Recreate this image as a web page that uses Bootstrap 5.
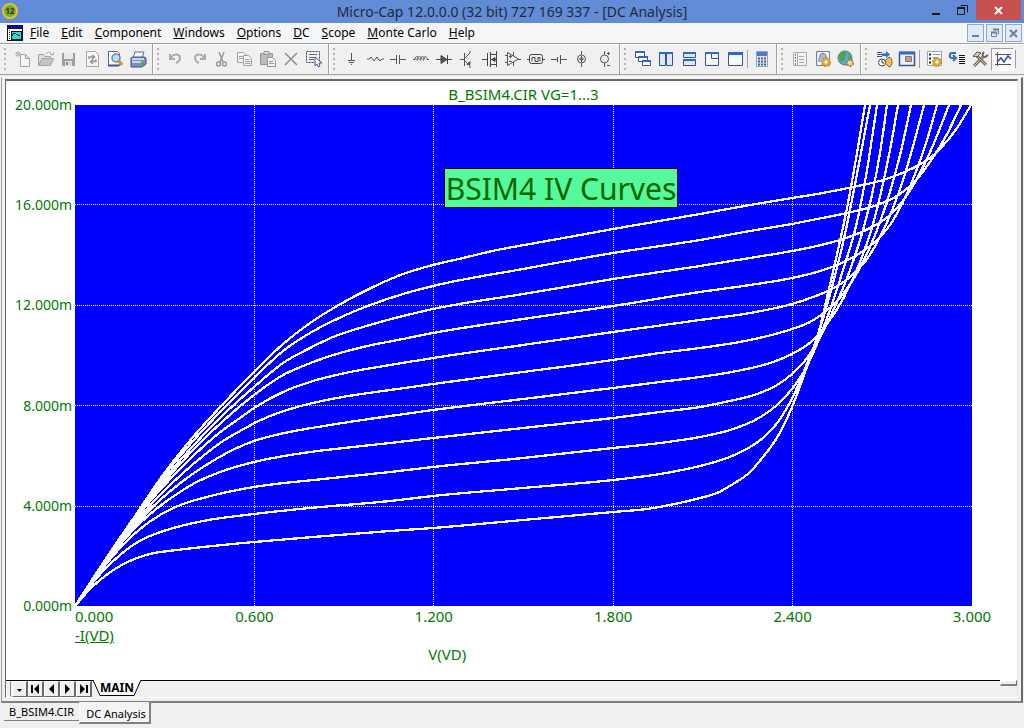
<!DOCTYPE html>
<html lang="en">
<head>
<meta charset="utf-8">
<meta name="viewport" content="width=device-width, initial-scale=1">
<title>Micro-Cap 12 - DC Analysis</title>
<link href="https://cdn.jsdelivr.net/npm/bootstrap@5.3.0/dist/css/bootstrap.min.css" rel="stylesheet">
<style>
  body { font-family: "Noto Sans", sans-serif; font-size: 12px; line-height: 16px; background: #f0f0f0; color: #000; }
  button { border: 0; background: none; padding: 0; }
  .titlebar { background: #628cd5; height: 23px; color: #1f2a3c; }
  .titlebar h1 { font-size: 14px; line-height: 23px; font-weight: 400; }
  .app-icon { left: 1px; top: 3px; }
  .win-ctl { right: 3px; top: 0; }
  .win-ctl button { width: 26px; height: 20px; }
  .win-ctl .close-btn { width: 45px; background: #c75050; }
  .menubar { background: #f5f6f7; height: 20px; padding-left: 7px; }
  .menubar .menus { gap: 12px; margin-left: 7px; }
  .menubar a { color: #000; text-decoration: none; line-height: 18px; }
  .mdi-ctl { gap: 2px; margin-right: 2px; }
  .mdi-ctl button { width: 17px; height: 18px; border: 1px solid #8fa8c8; background: #dfebf8; }
  .toolbar { height: 32px; border-top: 1px solid #a0a0a0; border-bottom: 1px solid #a0a0a0; box-shadow: inset 0 1px #fff; }
  .tool-group { padding-right: 3px; border-right: 1px solid #a0a0a0; box-shadow: 1px 0 #fff; }
  .tool-group:last-child { border-right: 0; box-shadow: none; }
  .grip { width: 3px; height: 22px; margin: 0 4px; background: repeating-linear-gradient(#b4b4b4 0 2px, transparent 2px 5px); background-size: 2px 100%; background-repeat: no-repeat; }
  .tool { width: 23px; height: 23px; }
  .tool svg { width: 18px; height: 18px; }
  .tool.pressed { border: 1px solid #a0a0a0; border-right-color: #fff; border-bottom-color: #fff; background: #f8f8f8; }
  .tool-sep { width: 1px; height: 18px; margin: 0 2px 0 1px; background: #a0a0a0; }
  .mdi { margin: 2px 1px 0 1px; border: 1px solid #fff; border-left-color: #a0a0a0; border-right: 2px solid #696969; border-bottom: 2px solid #808080; padding: 1px 3px 3px 3px; min-height: 0; }
  .sheet { border: 2px solid #696969; border-left-width: 1px; border-right: 1px solid #e3e3e3; border-bottom: 1px solid #fff; min-height: 0; }
  .chart { background: #fff; color: #007a00; font-size: 15px; line-height: 20px; min-height: 0; padding-top: 3px; }
  .chart h2 { font-size: 15px; font-weight: 400; line-height: 20px; margin: 0 45px 1px 69px; }
  .y-axis { width: 69px; padding-right: 3px; margin: -10px 0; font-size: 14px; }
  .plot { background: #00f; margin-right: 45px; min-width: 0; }
  .plot svg { display: block; width: 100%; height: 100%; position: absolute; inset: 0; }
  .plot-label { left: 41.1%; top: 12.6%; height: 40px; padding: 0 1px; background: #54fa9b; border: 1px solid #000; color: #006400; font-size: 30px; line-height: 40px; }
  .x-axis { margin: 0 45px 0 69px; height: 19px; }
  .x-axis span { width: 0; display: flex; justify-content: center; }
  .x-axis span:first-child { justify-content: flex-start; }
  .captions { margin: 0 45px 0 69px; font-size: 15px; padding-bottom: 16px; }
  .captions a { color: #007a00; }
  .captions p { width: 83%; margin-top: -1px; }
  .sheet-nav { height: 17px; border-top: 1px solid #000; background: #f0f0f0; }
  .nav-stub { width: 5px; border: 1px solid #fff; border-right-color: #808080; margin-right: 1px; }
  .step { width: 16px; height: 16px; border: 1px solid #fff; border-right: 2px solid #696969; border-bottom: 1px solid #696969; background: #f0f0f0; }
  .step svg { display: block; margin: auto; }
  .slope { display: block; margin-top: -1px; }
  .sheet-tab { font-weight: 700; font-size: 12px; line-height: 14px; height: 16px; margin-top: -1px; background: #fff; border-bottom: 1px solid #000; }
  .splitter { width: 17px; height: 6px; margin-top: -1px; background: #f0f0f0; border: 1px solid #fff; border-right-color: #696969; border-bottom: 2px solid #808080; }
  .doc-tabs { height: 25px; padding-left: 4px; font-size: 11px; }
  .doc-tabs button { height: 18px; padding: 0 5px; border-bottom: 1px solid #808080; line-height: 16px; }
  .doc-tabs .current { height: 22px; margin-top: -1px; padding: 3px 3px 0 6px; background: #f4f4f4; border-bottom: 2px solid #808080; border-left: 1px solid #fff; border-right: 2px solid #808080; }
</style>
</head>
<body class="vh-100 d-flex flex-column overflow-hidden">

<header class="titlebar position-relative flex-shrink-0">
  <svg class="app-icon position-absolute" width="18" height="16" viewBox="0 0 18 16"><circle cx="9" cy="8" r="7" fill="#5cb82e" stroke="#f0bc30" stroke-width="2"/><text x="9" y="11" text-anchor="middle" font-size="8" font-weight="700" fill="#7d1518">12</text></svg>
  <h1 class="text-center mb-0">Micro-Cap 12.0.0.0 (32 bit) 727 169 337 - [DC Analysis]</h1>
  <div class="win-ctl position-absolute d-flex">
    <button type="button" aria-label="Minimize"><svg width="16" height="16"><path d="M3 12h8" stroke="#1a1a1a" stroke-width="2"/></svg></button>
    <button type="button" aria-label="Restore"><svg width="16" height="16"><path d="M2.500 5.500h7v7h-7zM5.500 3.500h7v7" fill="none" stroke="#1a1a1a"/><path d="M2 6h8" stroke="#1a1a1a" stroke-width="2"/></svg></button>
    <button type="button" class="close-btn" aria-label="Close"><svg width="10" height="10"><path d="M1 1l7 7M8 1l-7 7" stroke="#fff" stroke-width="2"/></svg></button>
  </div>
</header>

<nav class="menubar d-flex align-items-center flex-shrink-0">
  <svg width="16" height="16" shape-rendering="crispEdges"><path d="M0 0h16v16H0z" fill="#111"/><path d="M1 1h14v2H1z" fill="#00c"/><path d="M1 4h14v11H1z" fill="#fff"/><path d="M4 6h10v8H4z" fill="#20e0e0" stroke="#111"/><path d="M5 11c2-4 3-3 4-2l4 2" fill="none" stroke="#111"/><path d="M2 5v9" stroke="#333" stroke-dasharray="1 1"/></svg>
  <div class="menus d-flex">
    <a href="#"><u>F</u>ile</a><a href="#"><u>E</u>dit</a><a href="#"><u>C</u>omponent</a><a href="#"><u>W</u>indows</a><a href="#"><u>O</u>ptions</a><a href="#"><u>D</u>C</a><a href="#"><u>S</u>cope</a><a href="#"><u>M</u>onte Carlo</a><a href="#"><u>H</u>elp</a>
  </div>
  <div class="mdi-ctl d-flex ms-auto">
    <button type="button" class="d-flex" aria-label="Minimize document"><svg width="15" height="16"><path d="M4 11h7" stroke="#6b7f98" stroke-width="2"/></svg></button>
    <button type="button" class="d-flex" aria-label="Restore document"><svg width="15" height="16"><path d="M4.500 7.500h5v4h-5zM6.500 4.500h5v5" fill="none" stroke="#6b7f98"/><path d="M4 7.500h6M6 4.500h6" stroke="#6b7f98" stroke-width="2"/></svg></button>
    <button type="button" class="d-flex" aria-label="Close document"><svg width="15" height="16"><path d="M4 5l7 7M11 5l-7 7" stroke="#6b7f98" stroke-width="2"/></svg></button>
  </div>
</nav>

<div class="toolbar d-flex flex-shrink-0" role="toolbar" aria-label="Tools">
  <div class="tool-group d-flex align-items-center"><span class="grip"></span>
    <button class="tool" aria-label="New"><svg viewBox="0 0 18 18" fill="#f6f6f6" stroke="#a4a4a4"><path d="M6.500 4.500h5l4 4v8h-9zM11.500 4.500v4h4"/><path d="M4 1v6M1 4h6M2 2l4 4M6 2l-4 4" stroke="#b0b0b0"/></svg></button>
    <button class="tool" aria-label="Open"><svg viewBox="0 0 18 18" fill="#ddd" stroke="#a4a4a4"><path d="M1.500 15.500v-11h5l1.500 2h5.500v3"/><path d="M1.500 15.500l3.500-7h11.500l-3 7z" fill="#c4c4c4"/><path d="M9 4c2-3 5-2 6 1M13 4l3 1 1-3" fill="none"/></svg></button>
    <button class="tool" aria-label="Save"><svg viewBox="0 0 18 18"><path d="M2 3h13v13H2z" fill="#a0a0a0"/><path d="M4 3h9v6H4z" fill="#e8e8e8"/><path d="M5 11h7v5H5z" fill="#ddd"/><path d="M6 12h2v3H6z" fill="#888"/></svg></button>
    <button class="tool" aria-label="Revert"><svg viewBox="0 0 18 18" fill="#f8f8f8" stroke="#a4a4a4"><path d="M3.500 1.500h9l3 3v12h-12z"/><path d="M6 9V7h5M9 5l2.500 2L9 9M13 9.500v2H8M10 9.500L7.500 12l2.500 2" fill="none" stroke="#949494" stroke-width="1.500"/></svg></button>
    <button class="tool" aria-label="Print preview"><svg viewBox="0 0 18 18"><path d="M2.500 1.500h9l2 2v12h-11z" fill="#fff" stroke="#536a94"/><path d="M2 15.500h11" stroke="#3f568a" stroke-width="2"/><circle cx="10" cy="8" r="4" fill="#b7dff7" stroke="#71849e" stroke-width="1.500"/><path d="M13 11l3 4" stroke="#d29230" stroke-width="3"/></svg></button>
    <button class="tool" aria-label="Print"><svg viewBox="0 0 18 18"><path d="M6 2h9l-2 6H4z" fill="#fff" stroke="#51699c"/><path d="M2 8l2-1h11l2 1v6l-4 3H2z" fill="#7d91b9" stroke="#3d5484"/><path d="M3 9h12M3 12h9" stroke="#e3eafa" stroke-width="1.500"/><path d="M12 12h3v3h-3z" fill="#36bd42"/></svg></button>
  </div>
  <div class="tool-group d-flex align-items-center"><span class="grip"></span>
    <button class="tool" aria-label="Undo"><svg viewBox="0 0 18 18" fill="none" stroke="#aaa" stroke-width="2"><path d="M3 4v5h5M4 8c1-4 9-5 9 0 0 3-2 4-4 5"/></svg></button>
    <button class="tool" aria-label="Redo"><svg viewBox="0 0 18 18" fill="none" stroke="#aaa" stroke-width="2"><path d="M15 4v5h-5M14 8C13 4 5 3 5 8c0 3 2 4 4 5"/></svg></button>
    <button class="tool" aria-label="Cut"><svg viewBox="0 0 18 18" fill="none" stroke="#999" stroke-width="1.500"><path d="M6 2l4 10M11 2L7 12"/><circle cx="5.500" cy="14" r="2"/><circle cx="11.500" cy="14" r="2"/></svg></button>
    <button class="tool" aria-label="Copy"><svg viewBox="0 0 18 18" fill="#f6f6f6" stroke="#a0a0a0"><path d="M1.500 2.500h6l3 3v7h-9z"/><path d="M7.500 5.500h5l3 3v7h-8zM3 6.500h4M3 8.500h4M9 9.500h4M9 11.500h5M9 13.500h5"/></svg></button>
    <button class="tool" aria-label="Paste"><svg viewBox="0 0 18 18" fill="#bbb" stroke="#949494"><path d="M1.500 3.500h12v11h-12z"/><path d="M5 1.500h5v3H5z" fill="#ddd"/><path d="M8.500 7.500h5l3 3v6h-8zM10 11.500h4M10 13.500h5" fill="#f4f4f4"/></svg></button>
    <button class="tool" aria-label="Delete"><svg viewBox="0 0 18 18" fill="none" stroke="#8c8c8c" stroke-width="1.500"><path d="M3 3l12 12M15 3L3 15"/></svg></button>
    <button class="tool" aria-label="Select all"><svg viewBox="0 0 18 18"><path d="M1.500 1.500h13v11h-13z" fill="none" stroke="#333f5e" stroke-dasharray="2 1"/><path d="M4 4.500h8M4 7.500h7M4 9.500h5" stroke="#5a6d96"/><path d="M10 7v9l2-2 1.500 3 1.500-1-1-3h3z" fill="#fff" stroke="#40598a"/></svg></button>
  </div>
  <div class="tool-group d-flex align-items-center"><span class="grip"></span>
    <button class="tool" aria-label="Ground"><svg viewBox="0 0 18 18" stroke="#555"><path d="M8.500 3v7M5 10.500h7M6 12.500h5M8 14.500h1"/></svg></button>
    <button class="tool" aria-label="Resistor"><svg viewBox="0 0 18 18" fill="none" stroke="#555"><path d="M1 9h2l2-2 3 4 3-4 3 4 2-2h2"/></svg></button>
    <button class="tool" aria-label="Capacitor"><svg viewBox="0 0 18 18" stroke="#555"><path d="M1 9.500h6M7.500 5v9M10.500 5v9M11 9.500h6"/></svg></button>
    <button class="tool" aria-label="Inductor"><svg viewBox="0 0 18 18" fill="none" stroke="#555"><path d="M1 9.500h2c0-4 4-4 3 0-1 2-2 0 0-2s4 0 3 2-2 0 0-2 4 0 3 2-2 0 0-2 3 0 3 2h2"/></svg></button>
    <button class="tool" aria-label="Diode"><svg viewBox="0 0 18 18" stroke="#444"><path d="M1 9.500h16M12.500 5v9"/><path d="M6 5.500v8l6-4z" fill="#555"/></svg></button>
    <button class="tool" aria-label="Transistor"><svg viewBox="0 0 18 18" fill="none" stroke="#555"><path d="M2 9.500h4M6.500 3v13M7 8l5-5V1M7 11l5 5v2"/><path d="M9 14.500h3v-3z" fill="#555"/></svg></button>
    <button class="tool" aria-label="MOSFET"><svg viewBox="0 0 18 18" fill="none" stroke="#444"><path d="M1 9.500h5M6.500 3v13M9.500 2v15M10 4.500h6M10 9.500h6M10 14.500h6M15.500 1v16"/><path d="M11 9.500l3-2v4z" fill="#444"/></svg></button>
    <button class="tool" aria-label="Op amp"><svg viewBox="0 0 18 18" fill="none" stroke="#555"><path d="M3.500 2.500v13l11-6.500zM1 5.500h2M1 12.500h2M14 9.500h3M5 6.500h3M5 11.500h3M6.500 5v3M9.500 2v4M9.500 12v4"/></svg></button>
    <button class="tool" aria-label="Transmission line"><svg viewBox="0 0 18 18" fill="none" stroke="#444"><rect x="2.500" y="4.500" width="13" height="9" rx="2"/><path d="M0 9.500h2M16 9.500h2M5 11.500v-4h3v4h3v-4h2v4"/></svg></button>
    <button class="tool" aria-label="Battery"><svg viewBox="0 0 18 18" stroke="#555"><path d="M1 9.500h6M7.500 7v5M10.500 5v9M11 9.500h6"/></svg></button>
    <button class="tool" aria-label="Current source"><svg viewBox="0 0 18 18" fill="none" stroke="#555"><circle cx="8.500" cy="9" r="4"/><path d="M8.500 1v4M8.500 13v4M8.500 6v6M6.500 9l2-2 2 2M6.500 9.500h4"/></svg></button>
    <button class="tool" aria-label="Voltage source"><svg viewBox="0 0 18 18" fill="none" stroke="#555"><circle cx="8.500" cy="9" r="4"/><path d="M8.500 1v4M8.500 13v4M11 3.500h3M12.500 2v3M11 15.500h3"/></svg></button>
  </div>
  <div class="tool-group d-flex align-items-center"><span class="grip"></span>
    <button class="tool" aria-label="Cascade"><svg viewBox="0 0 18 18" fill="#fff" stroke="#3b5484"><path d="M1.500 1.500h9v6h-9zM4.500 6.500h9v5h-9zM8.500 10.500h8v5h-8z"/><path d="M1 2h10M4 7h10M8 11h9" stroke="#2f67cb" stroke-width="2"/></svg></button>
    <button class="tool" aria-label="Tile vertical"><svg viewBox="0 0 18 18" fill="#dbe8fb" stroke="#3b5484"><path d="M2.500 2.500h6v13h-6zM9.500 2.500h6v13h-6z"/><path d="M2 3h7M9 3h7" stroke="#2f67cb" stroke-width="2"/></svg></button>
    <button class="tool" aria-label="Tile horizontal"><svg viewBox="0 0 18 18" fill="#dbe8fb" stroke="#3b5484"><path d="M3.500 2.500h12v5h-12zM3.500 9.500h12v6h-12z"/><path d="M3 3h13M3 10h13" stroke="#2f67cb" stroke-width="2"/></svg></button>
    <button class="tool" aria-label="Overlap"><svg viewBox="0 0 18 18" fill="#f4f8ff" stroke="#3b5484"><path d="M2.500 2.500h13v13h-13zM8.500 2.500v6h7"/><path d="M2 3h14" stroke="#2f67cb" stroke-width="2"/></svg></button>
    <button class="tool" aria-label="Maximize"><svg viewBox="0 0 18 18" fill="#f4f8ff" stroke="#3b5484"><path d="M2.500 2.500h14v13h-14z"/><path d="M2 3.500h15" stroke="#2f67cb" stroke-width="3"/></svg></button>
    <span class="tool-sep"></span>
    <button class="tool" aria-label="Calculator"><svg viewBox="0 0 18 18"><path d="M3.500 1.500h11v15h-11z" fill="#dbe5f8" stroke="#8fa2c6"/><path d="M4 2h10v4H4z" fill="#4f79cc"/><path d="M5 8.500h8M5 11.500h8M5 14.500h8" stroke="#4b628f" stroke-width="2" stroke-dasharray="2 1"/><path d="M11 8.500h2" stroke="#d65c50" stroke-width="2"/></svg></button>
  </div>
  <div class="tool-group d-flex align-items-center"><span class="grip"></span>
    <button class="tool" aria-label="Pages"><svg viewBox="0 0 18 18" fill="#f2f2f2" stroke="#aaa"><path d="M2.500 2.500h13v13h-13zM6.500 3v12M8 6.500h5M8 9.500h5M8 12.500h5"/><path d="M4.500 4v11" stroke="#888" stroke-dasharray="2 1"/></svg></button>
    <button class="tool" aria-label="Model settings"><svg viewBox="0 0 18 18"><path d="M2.500 1.500h13v14h-13z" fill="#eef3fc" stroke="#6d7d9b"/><path d="M5 12c-1-4 1-3 1-6s5-4 6 0-1 3 0 6" fill="#a8bce4" stroke="#64769c"/><circle cx="12" cy="12" r="4" fill="#e2b53a" stroke="#c8922a" stroke-dasharray="2 1" stroke-width="2"/><circle cx="12" cy="12" r="1.500" fill="#fff"/></svg></button>
    <button class="tool" aria-label="Global settings"><svg viewBox="0 0 18 18"><circle cx="8" cy="8" r="7" fill="#63a1d6" stroke="#4f8657"/><path d="M3 4c3-3 5-3 6-1s-2 3-1 5-3 4-4 3-3-4-1-7zM11 4l4 4-3 3z" fill="#4ba450"/><circle cx="13" cy="13" r="3" fill="#f1df9d" stroke="#a8822d" stroke-dasharray="2 1" stroke-width="2"/></svg></button>
  </div>
  <div class="tool-group d-flex align-items-center"><span class="grip"></span>
    <button class="tool" aria-label="Run"><svg viewBox="0 0 18 18"><path d="M2 2.500h5M2 4.500h5M2 6.500h5" stroke="#3a5688"/><path d="M7 3.500h4V1l4 3.500L11 8V6H7z" fill="#2d70c9"/><path d="M14 7c4 0 4 10 0 10l-4-4v-2z" fill="#eac153" stroke="#92641b"/><circle cx="7" cy="12.500" r="3.500" fill="#fff" stroke="#444"/><path d="M7 10v3h2" fill="none" stroke="#444"/></svg></button>
    <button class="tool" aria-label="Window"><svg viewBox="0 0 18 18"><path d="M1.500 2.500h15v13h-15z" fill="#edf4ff" stroke="#3b5484" stroke-width="1.500"/><path d="M1 3h16" stroke="#2f67cb" stroke-width="3"/><path d="M7.500 6.500h6v5h-6z" fill="#eb9062" stroke="#5e79b1"/></svg></button>
    <span class="tool-sep"></span>
    <button class="tool" aria-label="Limits"><svg viewBox="0 0 18 18"><path d="M2.500 1.500h14v14h-14z" fill="#fff" stroke="#9aa5b8"/><path d="M4 4.500h2M4 8.500h2M4 12.500h2" stroke="#222" stroke-width="2"/><path d="M8 4.500h7M8 7.500h5" stroke="#6f93cb"/><circle cx="12" cy="12" r="4" fill="#e2b53a" stroke="#c8922a" stroke-dasharray="2 1" stroke-width="2"/><circle cx="12" cy="12" r="1.500" fill="#fff"/></svg></button>
    <button class="tool" aria-label="Stepping"><svg viewBox="0 0 18 18"><path d="M8 3H4C1 3 1 8 4 8h3M5 5l3 3-3 3" fill="none" stroke="#3d6cbd" stroke-width="2"/><path d="M11 5.500h6M11 7.500h6M11 9.500h6M11 11.500h6M11 13.500h6" stroke="#111"/></svg></button>
    <button class="tool" aria-label="Options"><svg viewBox="0 0 18 18" fill="none"><path d="M12 7L3 16" stroke="#666" stroke-width="3"/><path d="M12 7L3 16" stroke="#d8d8d8"/><path d="M6 6l9 9" stroke="#7c6652" stroke-width="3"/><path d="M7 7l8 8" stroke="#e3bd88"/><path d="M2 6l4-4 4 1-4 4-2-1-1 1z" fill="#ccc" stroke="#555"/><path d="M13 2c-2 2-2 5 1 5l3-2" stroke="#666" stroke-width="2"/></svg></button>
    <button class="tool pressed d-flex align-items-center justify-content-center" aria-label="Show plot"><svg viewBox="0 0 18 18" fill="none"><path d="M3.500 2v14M1 14.500h16M1 4.500h16" stroke="#555"/><path d="M3 12l4-4 3 4 4-6 3 3" stroke="#2855b2" stroke-width="1.500"/></svg></button>
    <span class="tool-sep"></span>
  </div>
</div>

<main class="mdi flex-grow-1 d-flex flex-column">
  <section class="sheet flex-grow-1 d-flex flex-column">
    <div class="chart flex-grow-1 d-flex flex-column">
      <h2 class="text-center">B_BSIM4.CIR VG=1...3</h2>
      <div class="flex-grow-1 d-flex">
        <div class="y-axis d-flex flex-column justify-content-between text-end"><span>20.000m</span><span>16.000m</span><span>12.000m</span><span>8.000m</span><span>4.000m</span><span>0.000m</span></div>
        <div class="plot position-relative flex-grow-1">
          <svg viewBox="75 105 897 501" preserveAspectRatio="none" shape-rendering="crispEdges" fill="none" stroke="#fff">
            <path stroke-dasharray="1 1" d="M254.500 105v501M433.500 105v501M613.500 105v501M792.500 105v501M75 204.500h897M75 305.500h897M75 405.500h897M75 506.500h897"/>
            <g id="curves" stroke-width="2.300"></g>
          </svg>
          <div class="plot-label position-absolute text-nowrap">BSIM4 IV Curves</div>
        </div>
      </div>
      <div class="x-axis d-flex justify-content-between"><span>0.000</span><span>0.600</span><span>1.200</span><span>1.800</span><span>2.400</span><span>3.000</span></div>
      <div class="captions"><a href="#">-I(VD)</a><p class="text-center mb-0">V(VD)</p></div>
    </div>
    <div class="sheet-nav d-flex flex-shrink-0">
      <span class="nav-stub"></span>
      <button class="step" aria-label="Page list"><svg width="9" height="9"><path d="M2 4h5L4.500 7z"/></svg></button>
      <button class="step" aria-label="First page"><svg width="9" height="10"><path d="M0 1h2v8H0zM8 0v10L3 5z"/></svg></button>
      <button class="step" aria-label="Previous page"><svg width="9" height="10"><path d="M7 0v10L2 5z"/></svg></button>
      <button class="step" aria-label="Next page"><svg width="9" height="10"><path d="M2 0v10l5-5z"/></svg></button>
      <button class="step" aria-label="Last page"><svg width="9" height="10"><path d="M7 1h2v8H7zM1 0v10l5-5z"/></svg></button>
      <svg class="slope" width="8" height="16"><path d="M1 0l7 15.500V0z" fill="#fff"/><path d="M1 0l7 15.500" stroke="#000"/></svg>
      <button class="sheet-tab">MAIN</button>
      <svg class="slope" width="8" height="16"><path d="M7 0L0 15.500V0z" fill="#fff"/><path d="M7 0L0 15.500" stroke="#000"/></svg>
      <span class="splitter ms-auto"></span>
    </div>
  </section>
</main>

<footer class="doc-tabs d-flex align-items-start flex-shrink-0">
  <button type="button">B_BSIM4.CIR</button><button type="button" class="current">DC Analysis</button>
</footer>

<script src="https://cdn.jsdelivr.net/npm/bootstrap@5.3.0/dist/js/bootstrap.bundle.min.js"></script>
<script>
  // Drain current curves, VG = 1.0 ... 3.0, as x,y pairs in plot units
  const curves = [
    "75,606 90,589 105,576 120,566 137,558 150,554 177,550 203,547 254,542 313,537 390,531 433,528 523,520 613,512 647,509 670,505 700,498 717,493 733,484 750,472 763,457 778,436 792,407 803,378 813,349 819,331 828,293 838,250 848,203 857,153 865,105",
    "75,606 90,586 105,569 120,555 133,545 150,536 177,527 203,521 254,514 310,508 390,501 433,496 523,488 613,480 660,474 700,466 727,458 750,447 763,438 778,422 788,406 797,388 808,361 817,338 825,312 833,283 843,243 852,200 861,153 870,105",
    "75,606 90,585 107,563 122,546 140,529 160,515 183,504 203,498 223,493 254,487 323,479 390,472 433,467 523,458 613,448 660,443 700,437 730,430 757,419 777,405 792,389 807,366 817,344 830,310 843,270 857,222 867,170 877,105",
    "75,606 90,584 107,561 137,526 160,506 177,494 193,484 220,472 254,462 303,453 353,447 390,443 433,438 523,428 613,418 660,412 700,407 725,402 757,394 777,385 792,374 807,358 818,341 833,311 850,270 863,230 873,190 880,153 887,105",
    "75,606 90,584 107,560 137,523 160,500 183,481 203,467 223,455 254,441 280,434 330,425 390,416 433,410 523,399 613,388 660,382 700,377 737,371 770,363 792,354 812,341 827,324 843,299 860,262 873,224 882,188 890,150 898,105",
    "75,606 107,560 137,520 160,495 183,473 203,456 223,441 240,431 263,419 297,407 337,398 390,390 433,384 523,372 613,360 660,353 700,348 750,340 792,329 810,322 825,312 843,294 863,262 877,230 890,192 901,151 911,105",
    "75,606 107,559 137,517 160,490 193,456 223,430 240,418 254,408 283,392 313,381 350,372 390,365 433,358 523,345 613,332 700,320 750,313 792,304 813,297 832,289 850,277 867,259 880,237 893,208 905,174 915,139 924,105",
    "75,606 107,559 137,516 160,487 193,450 223,421 254,395 283,375 303,366 327,357 363,347 403,339 433,333 523,319 613,306 700,292 750,285 792,278 817,272 837,265 857,255 877,240 892,222 903,202 915,174 927,140 937,105",
    "75,606 107,558 137,515 160,484 193,446 223,415 254,387 283,363 310,348 333,337 363,327 403,316 433,309 523,294 613,279 700,266 750,258 792,251 817,246 843,239 870,228 890,215 905,198 920,173 934,143 949,105",
    "75,606 107,558 137,514 160,481 193,441 223,409 254,378 283,351 310,333 337,319 373,304 403,294 433,286 523,269 613,253 700,240 750,231 792,224 817,219 847,213 877,205 900,194 917,179 932,159 946,136 961,105",
    "75,606 107,557 137,513 160,479 193,437 223,404 254,372 283,344 310,323 337,306 373,287 403,274 433,265 463,258 497,250 530,244 580,235 613,229 700,214 750,205 792,198 817,194 853,187 883,180 913,168 930,158 940,149 957,128 971,105"
  ];
  // Hermite spline whose slopes weigh each neighbouring segment by the other's length
  const smooth = s => {
    const p = s.split(" ").map(q => q.split(",").map(Number)), n = p.length - 1;
    const h = i => p[i + 1][0] - p[i][0];
    const m = i => (p[i + 1][1] - p[i][1]) / h(i);
    const t = i => i === 0 ? m(0) : i === n ? m(n - 1) : (m(i - 1) * h(i) + m(i) * h(i - 1)) / (h(i) + h(i - 1));
    let d = "M" + p[0];
    for (let i = 0; i < n; i++) {
      const [x1, y1] = p[i], [x2, y2] = p[i + 1], k = h(i) / 3;
      d += `C${x1 + k},${y1 + t(i) * k} ${x2 - k},${y2 - t(i + 1) * k} ${x2},${y2}`;
    }
    return d;
  };
  const group = document.getElementById("curves");
  curves.forEach(s => {
    const path = document.createElementNS("http://www.w3.org/2000/svg", "path");
    path.setAttribute("d", smooth(s));
    group.append(path);
  });
</script>
</body>
</html>
